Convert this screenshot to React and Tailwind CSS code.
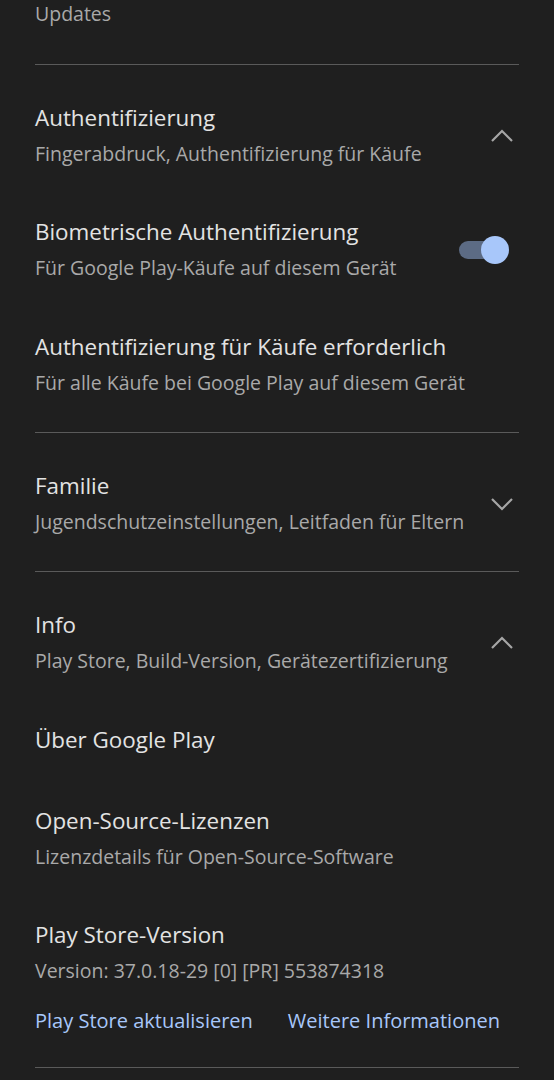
import React from "react";

const font = { fontFamily: "'Open Sans', Roboto, sans-serif" };

function Chevron({ up }) {
  return (
    <svg width="24" height="14" viewBox="0 0 24 14" className="shrink-0">
      <path
        d={up ? "M2 12 L12 2 L22 12" : "M2 2 L12 12 L22 2"}
        fill="none"
        stroke="#a6a6a6"
        strokeWidth="2.2"
      />
    </svg>
  );
}

function Item({ title, sub, right, className = "" }) {
  return (
    <div className={"flex items-center " + className}>
      <div className="flex-1 min-w-0">
        <div className="text-[22.4px] leading-[36px] text-[#e3e3e3]">{title}</div>
        {sub && <div className="text-[19.5px] leading-[36px] text-[#a9a9a9]">{sub}</div>}
      </div>
      {right}
    </div>
  );
}

function Divider({ className = "" }) {
  return <div className={"h-px bg-[#5a5a5a] " + className} />;
}

function Toggle() {
  return (
    <div className="relative w-[50px] h-[30px] mr-[10px] shrink-0 flex items-center">
      <div className="w-[42px] h-[18px] rounded-full bg-[#5c6b84]" />
      <div className="absolute right-0 top-px w-[28px] h-[28px] rounded-full bg-[#a8c7fa]" />
    </div>
  );
}

export default function App() {
  return (
    <div style={font} className="w-[554px] h-[1080px] bg-[#1f1f1f] px-[35px] overflow-hidden">
      <div className="text-[19.5px] leading-[28px] text-[#a9a9a9]">Updates</div>
      <Divider className="mt-[36px]" />
      <Item
        className="mt-[35px]"
        title="Authentifizierung"
        sub="Fingerabdruck, Authentifizierung für Käufe"
        right={<div className="mr-[5px]"><Chevron up /></div>}
      />
      <Item
        className="mt-[42px]"
        title="Biometrische Authentifizierung"
        sub="Für Google Play-Käufe auf diesem Gerät"
        right={<Toggle />}
      />
      <Item
        className="mt-[43px]"
        title="Authentifizierung für Käufe erforderlich"
        sub="Für alle Käufe bei Google Play auf diesem Gerät"
      />
      <Divider className="mt-[31px]" />
      <Item
        className="mt-[35px]"
        title="Familie"
        sub="Jugendschutzeinstellungen, Leitfaden für Eltern"
        right={<div className="mr-[5px]"><Chevron /></div>}
      />
      <Divider className="mt-[31px]" />
      <Item
        className="mt-[35px]"
        title="Info"
        sub="Play Store, Build-Version, Gerätezertifizierung"
        right={<div className="mr-[5px]"><Chevron up /></div>}
      />
      <Item className="mt-[43px]" title="Über Google Play" />
      <Item
        className="mt-[45px]"
        title="Open-Source-Lizenzen"
        sub="Lizenzdetails für Open-Source-Software"
      />
      <Item
        className="mt-[42px]"
        title="Play Store-Version"
        sub="Version: 37.0.18-29 [0] [PR] 553874318"
      />
      <div className="mt-[14px] flex gap-[35px] text-[20px] leading-[36px] font-medium text-[#a8c7fa]">
        <span>Play Store aktualisieren</span>
        <span>Weitere Informationen</span>
      </div>
      <Divider className="mt-[28px]" />
    </div>
  );
}
